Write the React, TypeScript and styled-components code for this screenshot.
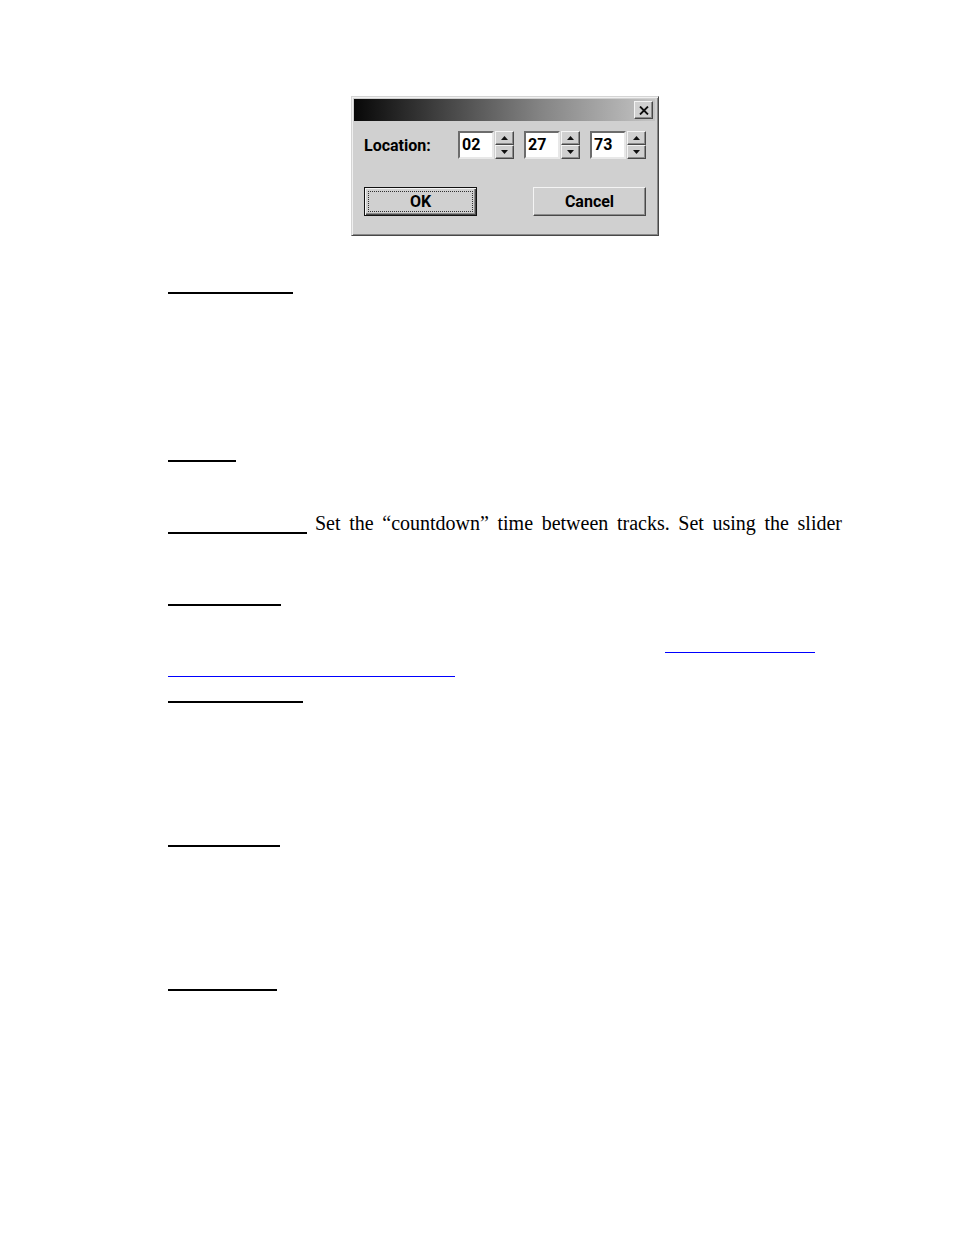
import React, { useState } from "react";
import styled, { createGlobalStyle, css } from "styled-components";

const GlobalStyle = createGlobalStyle`
  * { box-sizing: border-box; }
  body { margin: 0; background: #fff; color: #000; }
`;

const Page = styled.main`
  display: flex;
  flex-direction: column;
  padding: 96px 112px 96px 168px;
  font: 20px/26px "Liberation Serif", "Times New Roman", serif;
`;

const raised = css`
  border: 1px solid;
  border-color: #f4f4f4 #484848 #484848 #f4f4f4;
  box-shadow: inset -1px -1px 0 #8c8c8c;
  background: #d0d0d0;
`;

const Dialog = styled.form`
  align-self: center;
  width: 308px;
  height: 140px;
  padding: 2px;
  border: 1px solid;
  border-color: #d4d4d4 #484848 #484848 #d4d4d4;
  box-shadow: inset 1px 1px 0 #f0f0f0, inset -1px -1px 0 #888;
  background: #d0d0d0;
  font: bold 16px/20px Roboto, "Liberation Sans", sans-serif;
`;

const TitleBar = styled.header`
  display: flex;
  align-items: center;
  justify-content: flex-end;
  height: 22px;
  margin-right: 1px;
  padding-right: 2px;
  background: linear-gradient(to right, #080808, #404040 28%, #848484 62%, #c4c4c4);
`;

const CloseButton = styled.button`
  ${raised}
  display: flex;
  align-items: center;
  justify-content: center;
  width: 19px;
  height: 18px;
  padding: 0;
`;

const DialogBody = styled.div`
  display: flex;
  flex-direction: column;
  gap: 28px;
  padding: 10px 10px 0;
`;

const DialogRow = styled.div`
  display: flex;
  align-items: center;
  justify-content: space-between;
`;

const Caption = styled.span`
  padding-top: 2px;
`;

const SpinnerGroup = styled.div`
  display: flex;
  gap: 10px;
`;

const Spinner = styled.div`
  display: flex;
  gap: 1px;
  height: 28px;
`;

const SpinnerInput = styled.input`
  width: 36px;
  padding: 0 0 0 2px;
  border: 2px solid;
  border-color: #6c6c6c #e8e8e8 #e8e8e8 #6c6c6c;
  border-radius: 0;
  background: #fff;
  color: #000;
  font: inherit;
`;

const Steps = styled.div`
  display: grid;
  grid-template-rows: 1fr 1fr;
  width: 19px;
`;

const StepButton = styled.button`
  ${raised}
  display: flex;
  align-items: center;
  justify-content: center;
  padding: 0;
`;

const PushButton = styled.button<{ $default?: boolean }>`
  ${raised}
  width: 113px;
  height: 29px;
  padding: 0;
  color: #000;
  font: inherit;
  ${(p) =>
    p.$default &&
    css`
      border-color: #101010;
      box-shadow: inset 1px 1px 0 #f4f4f4, inset -1px -1px 0 #484848, inset -2px -2px 0 #8c8c8c;
      outline: 1px dotted #303030;
      outline-offset: -5px;
    `}
`;

const Section = styled.section<{ $space: number }>`
  margin-top: ${(p) => p.$space}px;
`;

const Line = styled.div<{ $end?: number }>`
  display: flex;
  justify-content: flex-end;
  height: 24px;
  padding-right: ${(p) => p.$end ?? 0}px;
`;

const Term = styled.div<{ $width: number }>`
  flex: none;
  width: ${(p) => p.$width}px;
  height: 24px;
  border-bottom: 2px solid #000;
`;

const TermRow = styled.div`
  display: flex;
  gap: 8px;
  height: 24px;
`;

const Description = styled.p`
  flex: 1;
  margin: 0;
  text-align: justify;
  text-align-last: justify;
`;

const BlankLink = styled.a<{ $width: number }>`
  display: block;
  width: ${(p) => p.$width}px;
  height: 24px;
  border-bottom: 1px solid #00f;
`;

function Arrow({ down }: { down?: boolean }) {
  return (
    <svg width="7" height="4" viewBox="0 0 7 4" aria-hidden="true">
      <path d={down ? "M0 0h7L3.5 4z" : "M0 4h7L3.5 0z"} fill="#101010" />
    </svg>
  );
}

function TimeSpinner({ label, initial, max }: { label: string; initial: number; max: number }) {
  const [value, setValue] = useState(initial);
  const set = (n: number) => setValue(Math.max(0, Math.min(max, n || 0)));
  return (
    <Spinner>
      <SpinnerInput
        aria-label={label}
        value={String(value).padStart(2, "0")}
        onChange={(e) => set(Number(e.target.value))}
      />
      <Steps>
        <StepButton type="button" aria-label={`Increase ${label}`} onClick={() => set(value + 1)}>
          <Arrow />
        </StepButton>
        <StepButton type="button" aria-label={`Decrease ${label}`} onClick={() => set(value - 1)}>
          <Arrow down />
        </StepButton>
      </Steps>
    </Spinner>
  );
}

export default function App() {
  return (
    <Page>
      <GlobalStyle />
      <Dialog onSubmit={(e) => e.preventDefault()}>
        <TitleBar>
          <CloseButton type="button" aria-label="Close">
            <svg width="10" height="9" viewBox="0 0 10 9" aria-hidden="true">
              <path d="M1 .5l8 8M9 .5l-8 8" stroke="#101010" strokeWidth="1.8" />
            </svg>
          </CloseButton>
        </TitleBar>
        <DialogBody>
          <DialogRow role="group" aria-labelledby="location">
            <Caption id="location">Location:</Caption>
            <SpinnerGroup>
              <TimeSpinner label="minutes" initial={2} max={99} />
              <TimeSpinner label="seconds" initial={27} max={59} />
              <TimeSpinner label="frames" initial={73} max={74} />
            </SpinnerGroup>
          </DialogRow>
          <DialogRow>
            <PushButton type="submit" $default>OK</PushButton>
            <PushButton type="button">Cancel</PushButton>
          </DialogRow>
        </DialogBody>
      </Dialog>

      <Section $space={34}>
        <Term $width={125} />
      </Section>
      <Section $space={144}>
        <Term $width={68} />
      </Section>
      <Section $space={48}>
        <TermRow>
          <Term $width={139} />
          <Description>
            Set the “countdown” time between tracks. Set using the slider
          </Description>
        </TermRow>
      </Section>
      <Section $space={48}>
        <Term $width={113} />
      </Section>
      <Section $space={23}>
        <Line $end={27}>
          <BlankLink href="#" aria-label="Reference" $width={150} />
        </Line>
        <BlankLink href="#" aria-label="Reference, continued" $width={287} />
      </Section>
      <Section $space={2}>
        <Term $width={135} />
      </Section>
      <Section $space={120}>
        <Term $width={112} />
      </Section>
      <Section $space={120}>
        <Term $width={109} />
      </Section>
    </Page>
  );
}
